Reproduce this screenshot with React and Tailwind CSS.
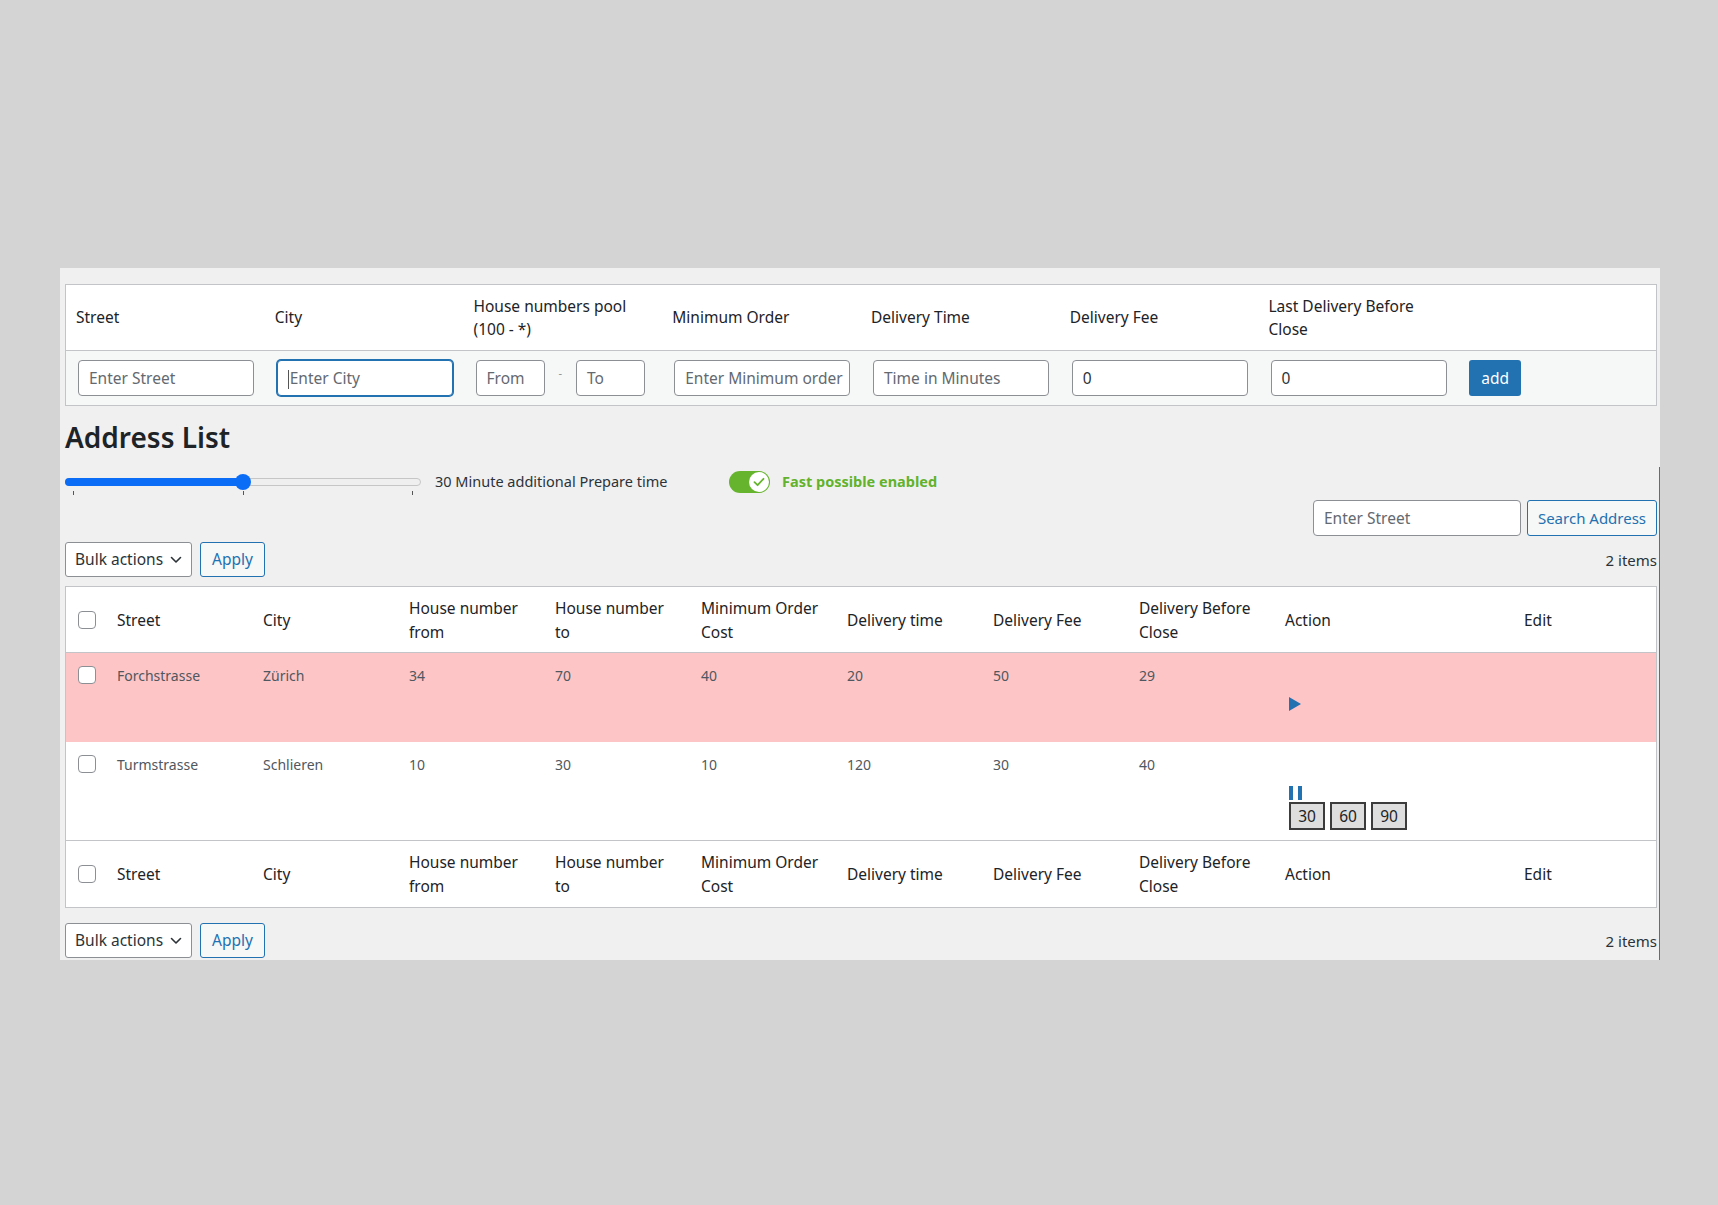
import React from 'react';

const formHeads = [
  ['Street'],
  ['City'],
  ['House numbers pool', '(100 - *)'],
  ['Minimum Order'],
  ['Delivery Time'],
  ['Delivery Fee'],
  ['Last Delivery Before', 'Close'],
  [],
];

const listHeads = [
  ['Street'],
  ['City'],
  ['House number', 'from'],
  ['House number', 'to'],
  ['Minimum Order', 'Cost'],
  ['Delivery time'],
  ['Delivery Fee'],
  ['Delivery Before', 'Close'],
  ['Action'],
  ['Edit'],
];

const rows = [
  { street: 'Forchstrasse', city: 'Zürich', from: 34, to: 70, min: 40, time: 20, fee: 50, before: 29, paused: false },
  { street: 'Turmstrasse', city: 'Schlieren', from: 10, to: 30, min: 10, time: 120, fee: 30, before: 40, paused: true },
];

const GRID = 'grid grid-cols-[41px_repeat(8,146px)_239px_142px]';

function Field({ text, placeholder, className = '', focus = false }) {
  return (
    <div
      className={`flex h-[36px] items-center overflow-hidden whitespace-nowrap rounded-[4px] border bg-white pl-[10px] pr-[8px] pt-[2px] text-[15.5px] ${
        focus ? 'border-[#2271b1] shadow-[0_0_0_1px_#2271b1]' : 'border-[#8c8f94]'
      } ${className}`}
    >
      {focus && <span className="mr-px h-[19px] w-px shrink-0 bg-[#555]" />}
      {text !== undefined ? (
        <span className="text-[#2c3338]">{text}</span>
      ) : (
        <span className="text-[#646970]">{placeholder}</span>
      )}
    </div>
  );
}

function Checkbox() {
  return <div className="h-[18px] w-[18px] rounded-[4px] border border-[#8c8f94] bg-white" />;
}

function Lines({ lines }) {
  return (
    <div>
      {lines.map((l) => (
        <div key={l}>{l}</div>
      ))}
    </div>
  );
}

function HeadRow({ border }) {
  return (
    <div className={`${GRID} h-[66px] items-center text-[15.5px] leading-[24px] text-[#1d2327] ${border}`}>
      <div className="pl-[12px]">
        <Checkbox />
      </div>
      {listHeads.map((h, i) => (
        <div key={i} className="px-[10px]">
          <Lines lines={h} />
        </div>
      ))}
    </div>
  );
}

function BulkBar() {
  return (
    <div className="flex items-center">
      <div className="flex h-[35px] w-[127px] items-center justify-between rounded-[3px] border border-[#8c8f94] bg-white pl-[9px] pr-[9px] pt-px text-[15.5px] text-[#2c3338]">
        <span>Bulk actions</span>
        <svg width="12" height="8" viewBox="0 0 12 8" fill="none">
          <path d="M1.5 1.5 6 6l4.5-4.5" stroke="#2c3338" strokeWidth="1.6" strokeLinecap="round" strokeLinejoin="round" />
        </svg>
      </div>
      <div className="ml-[8px] flex h-[35px] w-[65px] items-center justify-center rounded-[3px] border border-[#2271b1] bg-[#f6f7f7] pt-px text-[15.5px] text-[#2271b1]">
        Apply
      </div>
    </div>
  );
}

export default function App() {
  return (
    <div className="min-h-screen w-full bg-[#d4d4d4] pl-[60px] pt-[268px] font-['Noto_Sans',sans-serif]">
      <div className="w-[1600px] bg-[#f0f0f1]">
        {/* add address form */}
        <div className="pl-[5px] pr-[3px] pt-[16px]">
          <div className="border border-[#c3c4c7] bg-white">
            <div className="grid h-[66px] grid-cols-8 items-center border-b border-[#c3c4c7] text-[15.5px] leading-[23px] text-[#1d2327]">
              {formHeads.map((h, i) => (
                <div key={i} className="px-[10px]">
                  <Lines lines={h} />
                </div>
              ))}
            </div>
            <div className="grid h-[54px] grid-cols-8 items-center bg-[#f6f7f7]">
              <div className="pl-[12px]">
                <Field placeholder="Enter Street" className="w-[176px]" />
              </div>
              <div className="pl-[12px]">
                <Field placeholder="Enter City" className="w-[176px]" focus />
              </div>
              <div className="flex items-center pl-[12px]">
                <Field placeholder="From" className="w-[69px]" />
                <span className="mx-[14px] -translate-y-[5px] text-[11px] text-[#8c8f94]">-</span>
                <Field placeholder="To" className="w-[69px]" />
              </div>
              <div className="pl-[12px]">
                <Field placeholder="Enter Minimum order" className="w-[176px]" />
              </div>
              <div className="pl-[12px]">
                <Field placeholder="Time in Minutes" className="w-[176px]" />
              </div>
              <div className="pl-[12px]">
                <Field text="0" className="w-[176px]" />
              </div>
              <div className="pl-[12px]">
                <Field text="0" className="w-[176px]" />
              </div>
              <div className="pl-[12px]">
                <div className="flex h-[36px] w-[52px] items-center justify-center rounded-[3px] bg-[#2271b1] pt-px text-[15.5px] text-white">
                  add
                </div>
              </div>
            </div>
          </div>
          <h1 className="flex h-[61px] items-center text-[28px] font-semibold text-[#1d2327]">Address List</h1>
        </div>

        <div className="border-r border-[#6b6b6b] pb-[2px] pl-[5px] pr-[2px]">
          {/* prepare time slider + fast toggle */}
          <div className="flex h-[30px] items-center">
            <div className="relative h-[30px] w-[356px]">
              <div className="absolute left-0 right-0 top-[11px] h-[8px] rounded-full border border-[#c6c6c6] bg-[#efefef]" />
              <div className="absolute left-0 top-[11px] h-[8px] w-[180px] rounded-full bg-[#0b6df6]" />
              <div className="absolute left-[170px] top-[7px] h-[16px] w-[16px] rounded-full bg-[#0b6df6]" />
              <div className="absolute left-[8px] top-[24px] h-[4px] w-px bg-[#555]" />
              <div className="absolute left-[178px] top-[24px] h-[4px] w-px bg-[#555]" />
              <div className="absolute left-[347px] top-[24px] h-[4px] w-px bg-[#555]" />
            </div>
            <div className="ml-[14px] w-[294px] text-[14.5px] text-[#2c3338]">30 Minute additional Prepare time</div>
            <div className="flex h-[22px] w-[41px] items-center justify-end rounded-full bg-[#66b42e] pr-[1px]">
              <div className="flex h-[20px] w-[20px] items-center justify-center rounded-full bg-white">
                <svg width="12" height="10" viewBox="0 0 12 10" fill="none">
                  <path d="M1.5 5.2 4.6 8.2 10.5 1.8" stroke="#66b42e" strokeWidth="1.8" strokeLinecap="round" strokeLinejoin="round" />
                </svg>
              </div>
            </div>
            <span className="ml-[12px] text-[14.5px] font-bold text-[#62b22b]">Fast possible enabled</span>
          </div>

          {/* search */}
          <div className="mt-[3px] flex justify-end">
            <Field placeholder="Enter Street" className="w-[208px]" />
            <div className="ml-[6px] flex h-[36px] w-[130px] items-center justify-center rounded-[3px] border border-[#2271b1] bg-[#f6f7f7] pt-px text-[15px] text-[#2271b1]">
              Search Address
            </div>
          </div>

          <div className="mt-[6px] flex items-center justify-between">
            <BulkBar />
            <span className="pt-px text-[15px] text-[#2c3338]">2 items</span>
          </div>

          {/* address table */}
          <div className="mt-[9px] border border-[#c3c4c7] bg-white">
            <HeadRow border="border-b border-[#c3c4c7]" />
            {rows.map((r, i) => (
              <div
                key={r.street}
                className={`${GRID} items-start text-[14px] leading-[20px] text-[#50575e] ${
                  i === 0 ? 'h-[89px] bg-[#fdc5c6]' : 'h-[99px] border-b border-[#c3c4c7]'
                }`}
              >
                <div className="pl-[12px] pt-[13px]">
                  <Checkbox />
                </div>
                {[r.street, r.city, r.from, r.to, r.min, r.time, r.fee, r.before].map((v, j) => (
                  <div key={j} className="px-[10px] pt-[13px]">
                    {v}
                  </div>
                ))}
                <div className="pl-[14px] pt-[44px]">
                  {r.paused ? (
                    <>
                      <svg width="13" height="14" viewBox="0 0 13 14">
                        <rect x="0" y="0" width="4" height="14" fill="#2271b1" />
                        <rect x="9" y="0" width="4" height="14" fill="#2271b1" />
                      </svg>
                      <div className="mt-[2px] flex gap-[5px]">
                        {[30, 60, 90].map((m) => (
                          <div
                            key={m}
                            className="flex h-[28px] w-[36px] items-center justify-center border-2 border-[#3c3c3c] bg-[#dedede] text-[15.5px] text-[#1d2327]"
                          >
                            {m}
                          </div>
                        ))}
                      </div>
                    </>
                  ) : (
                    <svg width="12" height="14" viewBox="0 0 12 14">
                      <polygon points="0,0 12,7 0,14" fill="#2271b1" />
                    </svg>
                  )}
                </div>
                <div />
              </div>
            ))}
            <HeadRow border="" />
          </div>

          <div className="mt-[15px] flex items-center justify-between">
            <BulkBar />
            <span className="pt-px text-[15px] text-[#2c3338]">2 items</span>
          </div>
        </div>
      </div>
    </div>
  );
}
